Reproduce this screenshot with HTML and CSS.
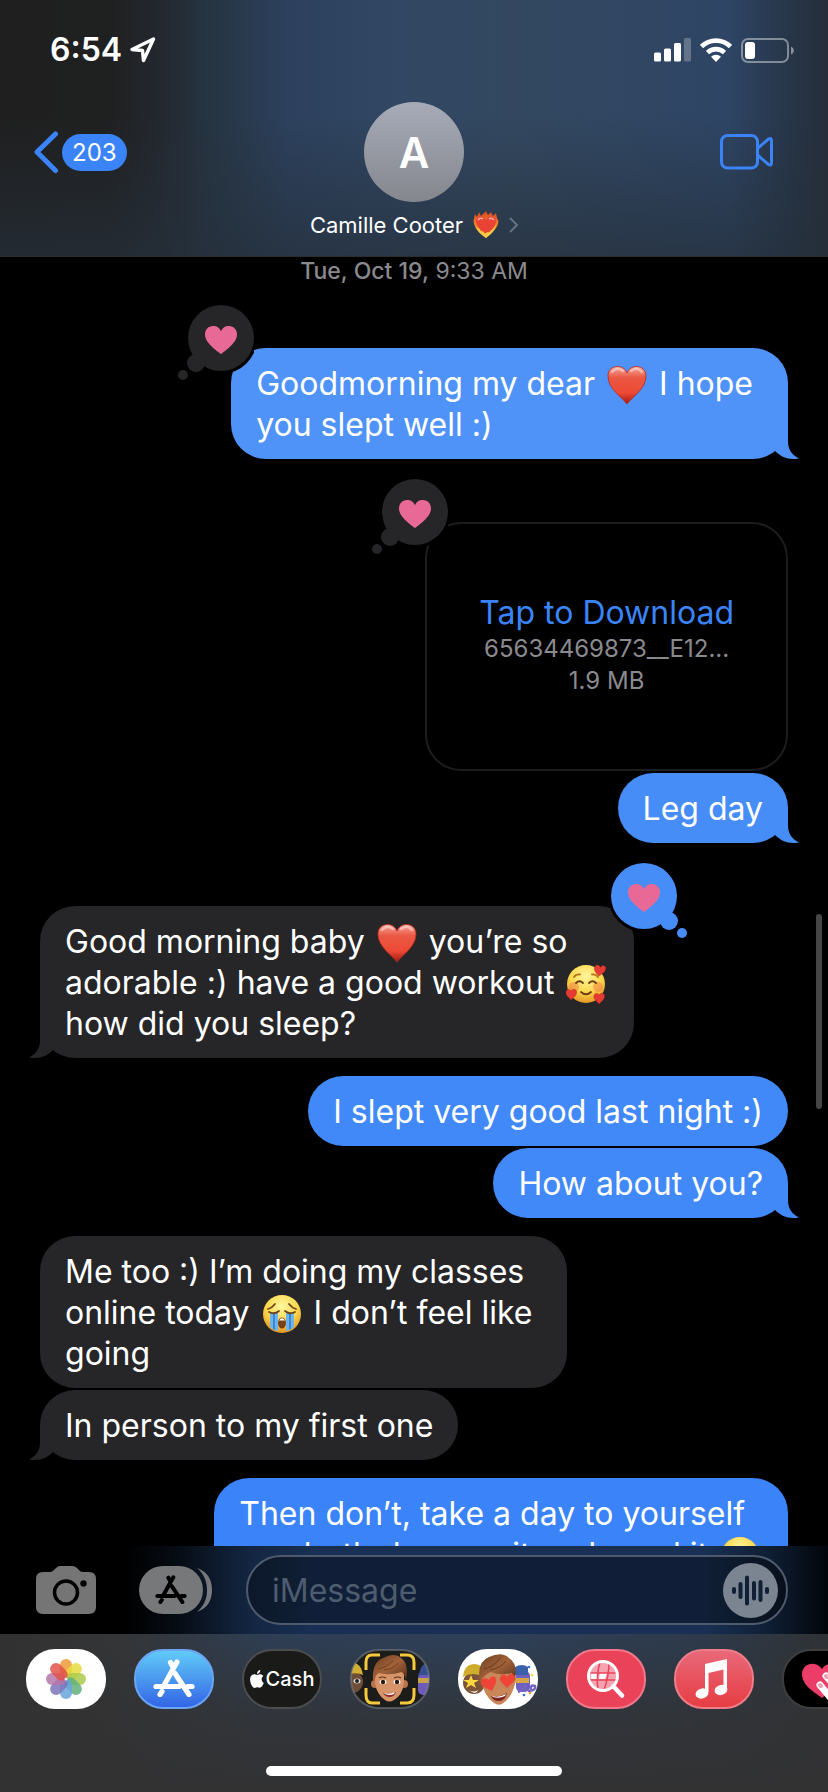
FILE: index.html
```html
<!DOCTYPE html>
<html lang="en">
<head>
<meta charset="utf-8">
<meta name="viewport" content="width=device-width, initial-scale=1">
<title>Messages</title>
<link rel="stylesheet" href="styles.css">
</head>
<body>
<svg class="defs" aria-hidden="true">
  <defs>
    <linearGradient id="heartFill" x1="0" y1="0" x2="0" y2="1">
      <stop offset="0" stop-color="#f8a79a"/><stop offset=".3" stop-color="#ea5844"/><stop offset=".7" stop-color="#ee4a35"/><stop offset="1" stop-color="#a51b12"/>
    </linearGradient>
    <radialGradient id="faceFill" cx=".5" cy=".3" r=".75">
      <stop offset="0" stop-color="#fff6a0"/><stop offset=".55" stop-color="#fbd84c"/><stop offset="1" stop-color="#e08a1e"/>
    </radialGradient>
    <linearGradient id="flame" x1="0" y1="0" x2="0" y2="1">
      <stop offset="0" stop-color="#d9431e"/><stop offset=".6" stop-color="#f4902c"/><stop offset="1" stop-color="#ffe04a"/>
    </linearGradient>
    <linearGradient id="storeFill" x1="0" y1="0" x2="0" y2="1">
      <stop offset="0" stop-color="#62cdf8"/><stop offset="1" stop-color="#3263e6"/>
    </linearGradient>
    <linearGradient id="hair" x1="0" y1="0" x2="1" y2="1">
      <stop offset="0" stop-color="#6e3e20"/><stop offset=".5" stop-color="#a0623a"/><stop offset="1" stop-color="#5a2f18"/>
    </linearGradient>
    <symbol id="tail" viewBox="0 0 30 35"><path d="M10 0H19V17C19 26 23 31 30 34.5C28 35 26 35 24 35C17 35 11 32 6 27L3 22Z"/></symbol>
    <symbol id="tapback" viewBox="0 0 76 77">
      <circle cx="43" cy="33" r="36" fill="#000"/>
      <circle cx="43" cy="33" r="33" fill="currentColor"/>
      <circle cx="18" cy="58" r="9" fill="currentColor"/>
      <circle cx="5" cy="70" r="5" fill="currentColor"/>
    </symbol>
    <symbol id="pinkHeart" viewBox="0 0 32 28"><path fill="#e86996" d="M16 28C12 25 0 17 0 8.500C0 3.500 3.500 0 8 0C12 0 15 2 16 5.500C17 2 20 0 24 0C28.500 0 32 3.500 32 8.500C32 17 20 25 16 28Z"/></symbol>
    <symbol id="redHeart" viewBox="0 0 40 40"><path fill="url(#heartFill)" stroke="#b9261b" stroke-width=".8" d="M20 39C15 32 1 24 1 11C1 5 5 1.500 10.500 1.500C15 1.500 18.500 4 20 8C21.500 4 25 1.500 29.500 1.500C35 1.500 39 5 39 11C39 24 25 32 20 39Z"/><path d="M5 7Q10 1 16 6M24 6Q30 1 35 7" fill="none" stroke="#fff" stroke-opacity=".4" stroke-width="2.500" stroke-linecap="round"/></symbol>
    <symbol id="storeMark" viewBox="0 0 42 38">
      <g fill="none" stroke="currentColor" stroke-width="5.200" stroke-linecap="round"><path d="M24 3 L11.500 25.500M17.500 3.500L20 8M22 14.500L36 35.500M3 27.500H26M34.500 27.500H39M9 32.500L7 35.500"/></g>
    </symbol>
  </defs>
</svg>

<header class="top">
  <div class="status">
    <div class="clock"><time>6:54</time>
      <svg width="26" height="26" viewBox="0 0 26 26" fill="none" stroke="#fff" stroke-width="3.400" stroke-linejoin="round"><path d="M2 12.500L23.500 2L13.500 23.500L12.500 13.500Z"/></svg>
    </div>
    <div class="signals">
      <svg width="37" height="24" viewBox="0 0 37 24" fill="#fff"><rect y="14.500" width="7" height="9" rx="1.500"/><rect x="10" y="10.500" width="7" height="13" rx="1.500"/><rect x="20" y="5" width="7" height="18.500" rx="1.500"/><rect x="30" width="7" height="23.500" rx="1.500" opacity=".25"/></svg>
      <svg width="32" height="24" viewBox="0 0 32 24"><g fill="none" stroke="#fff" stroke-width="4.600"><path d="M1.500 8.600A20.500 20.500 0 0 1 30.500 8.600"/><path d="M7.500 14.600A12.200 12.200 0 0 1 24.500 14.600"/></g><path fill="#fff" d="M11 18.800A7 7 0 0 1 21 18.800L16 24Z"/></svg>
      <svg width="54" height="25" viewBox="0 0 54 25"><rect x="1" y="1" width="46" height="23" rx="6" fill="none" stroke="#fff" stroke-opacity=".42" stroke-width="2"/><rect x="4" y="4" width="10" height="17" rx="3" fill="#fff"/><path d="M50 8.500Q53 10 53 12.500T50 16.500Z" fill="#fff" fill-opacity=".45"/></svg>
    </div>
  </div>
  <nav class="nav">
    <button class="back" type="button" aria-label="Back, 203 unread">
      <svg width="25" height="43" viewBox="0 0 25 43" fill="none" stroke="#3a84f8" stroke-width="5" stroke-linecap="round" stroke-linejoin="round"><path d="M21.500 3L3 21L21.500 39.500"/></svg>
      <span class="badge">203</span>
    </button>
    <button class="contact" type="button">
      <span class="avatar">A</span>
      <span class="name">Camille Cooter
        <svg width="26" height="28" viewBox="0 0 26 28" role="img" aria-label="heart on fire"><path fill="url(#flame)" d="M13 27C9 23 1 18 .5 10L2 3L4 6L6 1L8 5L11 2L13 0L15 4L18 1L20 5L23 2L24 7L25.500 10C25 18 17 23 13 27Z"/><path fill="#ea4335" d="M13 24C8 20 3 15 3 10C3 7 5 5.500 7.500 5.500C10.500 5.500 12.500 7.500 13 9.500C13.500 7.500 15.500 5.500 18.500 5.500C21 5.500 23 7 23 10C23 15 18 20 13 24Z"/><path d="M5 9Q7 6 10 8M16 8Q18.500 6 21 9" fill="none" stroke="#f9b0a4" stroke-width="1.500"/><path fill="#ffc843" d="M13 27C8 24 4 20 2 15Q5 19 6 17Q8 22 10 20Q12 24 14 21Q17 22 18 19Q20 19 23 14C22 20 17 24 13 27Z"/></svg>
        <svg width="9" height="16" viewBox="0 0 9 16" fill="none" stroke="#64707f" stroke-width="2"><path d="M1 1L8 8L1 15"/></svg>
      </span>
    </button>
    <button class="video" type="button" aria-label="FaceTime">
      <svg width="54" height="36" viewBox="0 0 54 36" fill="none" stroke="#3a84f8" stroke-width="3" stroke-linejoin="round"><rect x="1.500" y="1.500" width="36" height="32.500" rx="6"/><path d="M37.500 14.500L48.500 5Q51.500 3.500 51.500 6.500V29Q51.500 32 48.500 30.500L37.500 21Z"/></svg>
    </button>
  </nav>
</header>

<main class="thread">
  <p class="stamp"><b>Tue, Oct 19,</b> 9:33 AM</p>

  <div class="msg sent tint-a reacted loose">
    <p>Goodmorning my dear <svg class="emoji" role="img" aria-label="red heart"><use href="#redHeart"/></svg> I hope<br>you slept well :)</p>
    <svg class="tail"><use href="#tail"/></svg>
    <span class="react"><svg class="cloud"><use href="#tapback"/></svg><svg class="love"><use href="#pinkHeart"/></svg></span>
  </div>

  <div class="card reacted">
    <button type="button">Tap to Download</button>
    <span>65634469873__E12...</span>
    <span>1.9 MB</span>
    <span class="react"><svg class="cloud"><use href="#tapback"/></svg><svg class="love"><use href="#pinkHeart"/></svg></span>
  </div>

  <div class="msg sent tint-b joined">
    <p>Leg day</p>
    <svg class="tail"><use href="#tail"/></svg>
  </div>

  <div class="msg received reacted">
    <p>Good morning baby <svg class="emoji" role="img" aria-label="red heart"><use href="#redHeart"/></svg> you’re so<br>adorable :) have a good workout <svg class="emoji" viewBox="0 0 40 40" role="img" aria-label="smiling face with hearts"><circle cx="20" cy="20" r="19" fill="url(#faceFill)"/><g fill="#f0704a" opacity=".45"><circle cx="8" cy="23" r="5"/><circle cx="32" cy="23" r="5"/></g><g fill="none" stroke="#6e3b12" stroke-width="1.800" stroke-linecap="round"><path d="M10 19Q13.500 15.500 17 19M23 19Q26.500 15.500 30 19M15 28Q20 32.500 25 28"/><path d="M8 13Q10 10 14 10.500M26 10.500Q30 10 32 13" stroke="#b5701e"/></g><g fill="#e63b35" stroke="#b3221d" stroke-width=".4"><path d="M33 12C30 9 27 6 29 2.500C31 0 33.500 1 34.500 3.500C36 1 39 1 39.700 3.500C40.300 7 36.500 9.500 33 12Z"/><path d="M5 36C3 33 -1 31 0 27.500C1 24.500 4 25 5 27C7 24.500 10 25 10.500 27.500C11.500 31 7.500 33.500 5 36Z"/><path d="M33 40C31 37 27 35 28 31.500C29 28.500 32 29 33 31C35 28.500 38 29 38.500 31.500C39 35 35.500 37.500 33 40Z"/></g></svg><br>how did you sleep?</p>
    <svg class="tail"><use href="#tail"/></svg>
    <span class="react"><svg class="cloud"><use href="#tapback"/></svg><svg class="love"><use href="#pinkHeart"/></svg></span>
  </div>

  <div class="msg sent tint-c"><p>I slept very good last night :)</p></div>
  <div class="msg sent tint-c joined">
    <p>How about you?</p>
    <svg class="tail"><use href="#tail"/></svg>
  </div>

  <div class="msg received loose">
    <p>Me too :) I’m doing my classes<br>online today <svg class="emoji" viewBox="0 0 40 40" role="img" aria-label="loudly crying face"><circle cx="20" cy="20" r="19" fill="url(#faceFill)"/><path fill="#6db4ee" d="M8 19H16V37Q11 36 8 33ZM24 19H32V33Q29 36 24 37Z"/><path fill="#3f86cf" d="M11 20H13V36L11 35ZM27 20H29V35L27 36Z"/><path d="M7 18Q12 21 17 17M23 17Q28 21 33 18M6 15Q10 14 13 10M27 10Q30 14 34 15" fill="none" stroke="#73451a" stroke-width="1.800" stroke-linecap="round"/><ellipse cx="20" cy="29" rx="4" ry="5.500" fill="#74421c"/><path d="M17 26.500Q20 22 23 26.500Z" fill="#fff"/></svg> I don’t feel like<br>going</p>
  </div>
  <div class="msg received joined">
    <p>In person to my first one</p>
    <svg class="tail"><use href="#tail"/></svg>
  </div>

  <div class="msg sent tint-d">
    <p>Then don’t, take a day to yourself<br>you both deserve it and need it <svg class="emoji" viewBox="0 0 40 40" role="img" aria-label="smiling face"><circle cx="20" cy="20" r="19" fill="url(#faceFill)"/><path d="M10 18Q13 14 16 18M24 18Q27 14 30 18M12 26Q20 33 28 26" fill="none" stroke="#6e3b12" stroke-width="2"/></svg></p>
  </div>
  <div class="scrollbar"></div>
</main>

<form class="composer">
  <button class="camera" type="button" aria-label="Camera">
    <svg width="60" height="48" viewBox="0 0 60 48"><path fill="#757575" d="M7 6H14Q16 6 18 4L20 2Q22 0 24 0H36Q39 0 41 2L43 4Q44 6 47 6H53Q60 6 60 13V41Q60 48 53 48H7Q0 48 0 41V13Q0 6 7 6Z"/><circle cx="30" cy="26.500" r="11.500" fill="none" stroke="#000" stroke-width="3.500"/><circle cx="47.500" cy="17.500" r="3.200"/></svg>
  </button>
  <button class="apps" type="button" aria-label="Apps">
    <svg width="73" height="48" viewBox="0 0 73 48"><rect width="64" height="48" rx="24" fill="#77787a"/><path d="M58 2C69 6 73 14 73 24S69 42 58 46C65 40 68 33 68 24S65 8 58 2Z" fill="#77797c"/><svg x="16" y="9" width="32" height="29" color="#000"><use href="#storeMark"/></svg></svg>
  </button>
  <div class="field">
    <input type="text" placeholder="iMessage" aria-label="iMessage">
    <button class="audio" type="button" aria-label="Record audio">
      <svg width="55" height="55" viewBox="0 0 55 55"><circle cx="27.500" cy="27.500" r="27.500" fill="#7b8592"/><g stroke="#112036" stroke-width="4" stroke-linecap="round"><path d="M11 26V29M17.500 21V34M24 14.500V40.500M31 20V35.500M37.500 19V37M44 26V29"/></g></svg>
    </button>
  </div>
</form>

<footer class="drawer">
  <div class="strip">
    <button type="button" aria-label="Photos"><svg viewBox="0 0 80 60"><rect width="80" height="60" rx="29" fill="#fff"/>
      <g transform="translate(40 30)" fill-opacity=".85"><rect x="-6" y="-20" width="12" height="20" rx="6" fill="#f09a37"/><rect x="-6" y="-20" width="12" height="20" rx="6" fill="#e9dc3f" transform="rotate(45)"/><rect x="-6" y="-20" width="12" height="20" rx="6" fill="#aacb4b" transform="rotate(90)"/><rect x="-6" y="-20" width="12" height="20" rx="6" fill="#63b07c" transform="rotate(135)"/><rect x="-6" y="-20" width="12" height="20" rx="6" fill="#6aa5dc" transform="rotate(180)"/><rect x="-6" y="-20" width="12" height="20" rx="6" fill="#7c74b8" transform="rotate(225)"/><rect x="-6" y="-20" width="12" height="20" rx="6" fill="#b677aa" transform="rotate(270)"/><rect x="-6" y="-20" width="12" height="20" rx="6" fill="#e2524a" transform="rotate(315)"/><circle r="1.500" fill="#fff"/></g></svg></button>
    <button type="button" aria-label="App Store"><svg viewBox="0 0 80 60"><rect x="1" y="1" width="78" height="58" rx="28" fill="url(#storeFill)" stroke="#6aa4f3" stroke-width="2"/><svg x="19" y="10" width="42" height="38" color="#fff"><use href="#storeMark"/></svg></svg></button>
    <button type="button" class="cash" aria-label="Apple Cash"><svg width="14" height="18" viewBox="0 0 14 18" fill="#fff"><path d="M7 5C5 4 3.500 4 2 5C-1 7.500 0 12 1.500 15C3 18 4.500 18.500 6 17.500Q7.500 17 9 17.500C11 18.500 12.500 16 13.800 13C11 11.500 11 7.500 13.300 6C12 4 9.500 3.800 7 5ZM7 4C7 2 8.500 0 10.300 0C10.500 2 9 4 7 4Z"/></svg>Cash</button>
    <button type="button" aria-label="Memoji"><svg viewBox="0 0 80 60"><defs><clipPath id="pill"><rect x="1" y="1" width="78" height="58" rx="28"/></clipPath></defs><g clip-path="url(#pill)"><rect width="80" height="60" fill="#1c1c1b"/><circle cx="2" cy="33" r="11" fill="#6f4e39"/><path fill="#d2b02f" d="M-8 27Q-2 10 7 15Q12 18 13 26Q6 22 -8 27Z"/><ellipse cx="7" cy="32" rx="3.500" ry="2.500" fill="#ddd"/><circle cx="7" cy="32" r="2" fill="#222"/><rect x="68" y="24" width="14" height="22" rx="5" fill="#6c5bb8"/><path fill="#354f8f" d="M70 22Q72 12 82 15V26H68Z"/><rect x="68" y="29" width="12" height="5" fill="#cba14a"/></g>
      <g><circle cx="25" cy="35" r="4" fill="#b9734d"/><circle cx="54" cy="35" r="4" fill="#b9734d"/><path fill="#d79468" d="M25 22H54V34Q52 47 44 51Q39 54 35 51Q27 46 25 34Z"/><path fill="url(#hair)" d="M23 31Q22 13 33 9Q45 3 51 9Q59 14 56 31Q55 26 52 23Q39 27 29 24Q25 26 25 31Z"/><path d="M28 20Q36 19 43 12M34 21Q43 20 48 14" stroke="#73421f" fill="none"/><path d="M29 29Q32 27 36 29M44 29Q48 27 51 29" stroke="#56301a" stroke-width="1.200" fill="none"/><g fill="#fff"><ellipse cx="33" cy="33" rx="3.500" ry="2.200"/><ellipse cx="47" cy="33" rx="3.500" ry="2.200"/></g><circle cx="33" cy="33" r="2.200" fill="#2b1a10"/><circle cx="47" cy="33" r="2.200" fill="#2b1a10"/><path d="M33 44Q40 46 46 43Q44 48 40 48Q35 48 33 44Z" fill="#8b2d2a"/><path d="M34 44Q40 46 45 43L44 45Q40 47 35 45Z" fill="#fff"/></g>
      <path d="M30 6H22Q16 6 16 13V21M50 6H57Q64 6 64 13V21M16 39V46Q16 54 22 54H30M50 54H57Q64 54 64 46V39" fill="none" stroke="#f5c93c" stroke-width="3"/><rect x="1" y="1" width="78" height="58" rx="28" fill="none" stroke="#8f9298" stroke-opacity=".45" stroke-width="2"/></svg></button>
    <button type="button" aria-label="Memoji stickers"><svg viewBox="0 0 80 60"><rect width="80" height="60" rx="29" fill="#fff"/><circle cx="16" cy="34" r="11" fill="#7d5438"/><path fill="#cfac2c" d="M5 28Q6 15 17 15Q27 16 25 28Q15 22 5 28Z"/><path d="M13 26L15 31L21 31L16 34L18 39L13 36L8 39L10 34L5 31H11Z" fill="#ffd83e"/><path d="M11 41Q16 44 20 41Q18 47 11 41Z" fill="#fff"/><rect x="58" y="22" width="14" height="21" rx="5" fill="#6f5fc0"/><path fill="#3b62a8" d="M57 18Q64 14 70 18V26H57Z"/><rect x="57" y="29" width="14" height="5" fill="#d8a744"/><path d="M70 42Q78 42 77 37Q72 35 73 41M60 43Q68 40 67 35" fill="none" stroke="#7566c4" stroke-width="2.500"/><g fill="#3872e0"><circle cx="71" cy="18" r="1.300"/><circle cx="66" cy="46" r="1.300"/></g><circle cx="74" cy="26" r="1.500" fill="#efe04d"/><circle cx="72" cy="44" r="1.300" fill="#f09b3a"/>
      <path fill="#c98659" d="M24 20H57V35Q53 50 44 55Q40 57 36 54Q26 47 24 33Z"/><path fill="url(#hair)" d="M22 34Q18 13 31 8Q44 2 51 9Q60 14 57 32Q55 28 54 24Q42 27 33 23Q25 26 22 34Z"/><path d="M26 20Q36 18 42 9M32 21Q43 19 48 12" stroke="#69391b" fill="none"/><path d="M33 47Q41 49 49 44Q47 52 41 52Q35 52 33 47Z" fill="#7c2422"/><path d="M34 47Q41 49 48 45L47 47Q41 50 35 48Z" fill="#fff"/><g fill="#ee4537"><path d="M34 42C29 39 22 38 23 33C24 28 29 29 31 31C32 27 37 26 38 30C39 35 35 38 34 42Z"/><path d="M49 39C46 35 41 33 42 29C43 24 48 25 49 28C51 24 56 24 57 28C58 33 52 35 49 39Z"/></g></svg></button>
    <button type="button" aria-label="Images"><svg viewBox="0 0 80 60"><rect x="1" y="1" width="78" height="58" rx="28" fill="#ea4359" stroke="#f0788a" stroke-width="2"/><circle cx="37" cy="27" r="14" fill="#f5a3b0"/><path fill="#fff" d="M34 24H41L39 30H33ZM25 24H32V30H25Z"/><path d="M23 24H51M23 31H51M34 13Q30 27 32 41M43 13Q43 27 38 41" stroke="#ea4359" stroke-width="1.500" fill="none"/><circle cx="37" cy="27" r="14.500" fill="none" stroke="#fff" stroke-width="3"/><path d="M47.500 37.500L56 46.500" stroke="#fff" stroke-width="4.500" stroke-linecap="round"/></svg></button>
    <button type="button" aria-label="Music"><svg viewBox="0 0 80 60"><defs><linearGradient id="music" x1="0" y1="0" x2="0" y2="1"><stop offset="0" stop-color="#e9697a"/><stop offset="1" stop-color="#e63c42"/></linearGradient></defs><rect x="1" y="1" width="78" height="58" rx="28" fill="url(#music)" stroke="#ed7d88" stroke-width="2"/><g fill="#fff"><path d="M31 15L53 10V40H49.500V20.500L34.500 24V43H31Z"/><ellipse cx="28" cy="44.500" rx="6.500" ry="5" transform="rotate(-15 28 44.500)"/><ellipse cx="47" cy="41" rx="6.500" ry="5" transform="rotate(-15 47 41)"/></g></svg></button>
    <button type="button" aria-label="Digital Touch"><svg viewBox="0 0 80 60"><rect x="1" y="1" width="78" height="58" rx="28" fill="#000" stroke="#3e3e3f" stroke-width="2"/><path fill="#ec3d68" d="M40 49C34 44 20 37 20 25C20 14 34 11 40 20C46 11 60 14 60 25C60 37 46 44 40 49Z"/><g stroke="#fff" stroke-width="7" stroke-linecap="round"><path d="M44 27L54 38M38 36L48 48"/></g><g stroke="#f2a0b6" stroke-width="4" stroke-linecap="round"><path d="M44 27L45 28M38 36L39 37"/></g></svg></button>
  </div>
  <div class="home"></div>
</footer>
</body>
</html>
```
FILE: styles.css
```css
* { box-sizing: border-box; }

body {
  margin: 0;
  height: 100vh;
  display: flex;
  flex-direction: column;
  overflow: hidden;
  background: #000;
  color: #fff;
  font-family: Inter, "Liberation Sans", sans-serif;
}

p { margin: 0; }

svg { display: block; flex: none; }

.defs { position: absolute; width: 0; height: 0; }

button {
  margin: 0;
  padding: 0;
  border: 0;
  background: none;
  color: inherit;
  font: inherit;
}

/* Header */
.top {
  flex: none;
  border-bottom: 1px solid #2c2d2f;
  background:
    linear-gradient(to bottom, rgba(37, 47, 58, 0) 45%, rgba(37, 47, 58, .7) 100%),
    linear-gradient(to right, #1f1f1f 0%, #1f2020 13%, #23272e 19%, #263441 25%, #2d415e 35%, #314763 48%, #334860 62%, #2e4565 88%, #27364a 95%, #262e38 100%);
}

.status {
  display: flex;
  justify-content: space-between;
  align-items: center;
  height: 102px;
  padding: 0 33px 2px 50px;
}

.clock, .signals { display: flex; align-items: center; gap: 9px; }

.clock { gap: 8px; font-size: 32px; font-weight: 600; line-height: 40px; }

.nav {
  display: grid;
  grid-template-columns: 1fr auto 1fr;
  align-items: start;
  padding: 0 54px 14px 34px;
}

.back {
  justify-self: start;
  display: flex;
  align-items: center;
  gap: 3px;
  height: 100px;
}

.badge {
  padding: 0 10px;
  border-radius: 19px;
  background: #3a84f8;
  font-size: 24px;
  line-height: 37px;
}

.contact {
  display: flex;
  flex-direction: column;
  align-items: center;
  gap: 6px;
  margin-left: 20px;
}

.avatar {
  width: 100px;
  height: 100px;
  border-radius: 50%;
  background: linear-gradient(#a7abb8, #84878d);
  font-size: 42px;
  font-weight: 600;
  line-height: 102px;
}

.name {
  display: flex;
  align-items: center;
  gap: 10px;
  font-size: 22px;
  line-height: 34px;
}

.video {
  justify-self: end;
  display: flex;
  align-items: center;
  height: 100px;
}

/* Conversation */
.thread {
  position: relative;
  flex: 1;
  min-height: 0;
  overflow: hidden;
  display: flex;
  flex-direction: column;
  padding: 0 40px;
}

.stamp {
  flex: none;
  color: #8a8a8e;
  font-size: 23px;
  line-height: 28px;
  text-align: center;
}

.stamp b { font-weight: 500; }

.msg {
  position: relative;
  flex: none;
  align-self: flex-start;
  margin-top: 18px;
  padding: 15px 25px 14px;
  border-radius: 35px;
  background: var(--tint);
  font-size: 32px;
  line-height: 41px;
  white-space: nowrap;
}

.received { --tint: #262628; }
.sent { align-self: flex-end; }
.loose { padding-right: 35px; }
.tint-a { --tint: #4f93f8; }
.tint-b { --tint: #478df8; }
.tint-c { --tint: #4189f8; }
.tint-d { --tint: #3a83f8; }
.joined { margin-top: 2px; }
.reacted { margin-top: 63px; }

.emoji {
  display: inline-block;
  width: 40px;
  height: 40px;
  margin: -4px 3px;
  vertical-align: -6px;
}

.tail {
  position: absolute;
  right: -11px;
  bottom: 0;
  width: 30px;
  height: 35px;
  fill: var(--tint);
}

.received .tail {
  right: auto;
  left: -11px;
  transform: scaleX(-1);
}

.react {
  position: absolute;
  top: -43px;
  left: -53px;
  width: 76px;
  height: 77px;
  color: #262628;
}

.cloud { width: 100%; height: 100%; }

.love {
  position: absolute;
  top: 21px;
  left: 27px;
  width: 32px;
  height: 28px;
}

.received .react {
  left: auto;
  right: -53px;
  color: #478df8;
  transform: scaleX(-1);
}

.card {
  position: relative;
  flex: none;
  align-self: flex-end;
  display: flex;
  flex-direction: column;
  align-items: center;
  justify-content: center;
  min-height: 249px;
  padding: 0 54px 4px;
  border-radius: 36px;
  box-shadow: inset 0 0 0 2px #1d1d1f;
  color: #8a8a8e;
  font-size: 24px;
  line-height: 32px;
}

.card button { color: #3a84f8; font-size: 32px; line-height: 41px; }

.scrollbar {
  position: absolute;
  top: 51%;
  right: 6px;
  width: 6px;
  height: 195px;
  border-radius: 3px;
  background: #464646;
}

/* Message entry */
.composer {
  flex: none;
  display: flex;
  align-items: center;
  gap: 34px;
  margin: 0;
  padding: 9px 40px 9px 36px;
  background: linear-gradient(to right, #000 0%, #000 15%, #060b12 21%, #132540 30%, #193054 38%, #193054 85%, #0f1e33 93%, #02050a 100%);
}

.apps { margin-left: 9px; }

.field {
  flex: 1;
  min-width: 0;
  display: flex;
  align-items: center;
  height: 70px;
  padding: 0 8px 0 24px;
  border: 2px solid #4e5b6d;
  border-radius: 35px;
  background: rgba(0, 0, 0, .34);
}

.field input {
  flex: 1;
  width: 100%;
  min-width: 0;
  padding: 0;
  border: 0;
  outline: 0;
  background: none;
  color: #fff;
  font: 32px/41px Inter, "Liberation Sans", sans-serif;
}

.field input::placeholder { color: #4e5c70; opacity: 1; }

/* App drawer */
.drawer {
  flex: none;
  display: flex;
  flex-direction: column;
  align-items: center;
  gap: 57px;
  padding: 15px 0 16px;
  background:
    linear-gradient(to bottom, rgba(50, 50, 51, 0) 0%, rgba(50, 50, 51, .8) 55%, #323233 100%),
    linear-gradient(to right, #313132 0%, #343536 14%, #2e3e54 32%, #2e4059 60%, #2d3a4b 85%, #2f3235 100%);
}

.strip {
  align-self: stretch;
  display: flex;
  gap: 28px;
  overflow: hidden;
  padding-left: 26px;
}

.strip button { flex: none; width: 80px; height: 60px; }

.strip .cash {
  display: flex;
  align-items: center;
  justify-content: center;
  gap: 2px;
  border: 2px solid #4b4c4e;
  border-radius: 30px;
  background: #1a1a19;
  font-size: 20px;
  font-weight: 500;
}

.home {
  width: 296px;
  height: 10px;
  border-radius: 5px;
  background: #fff;
}
```
